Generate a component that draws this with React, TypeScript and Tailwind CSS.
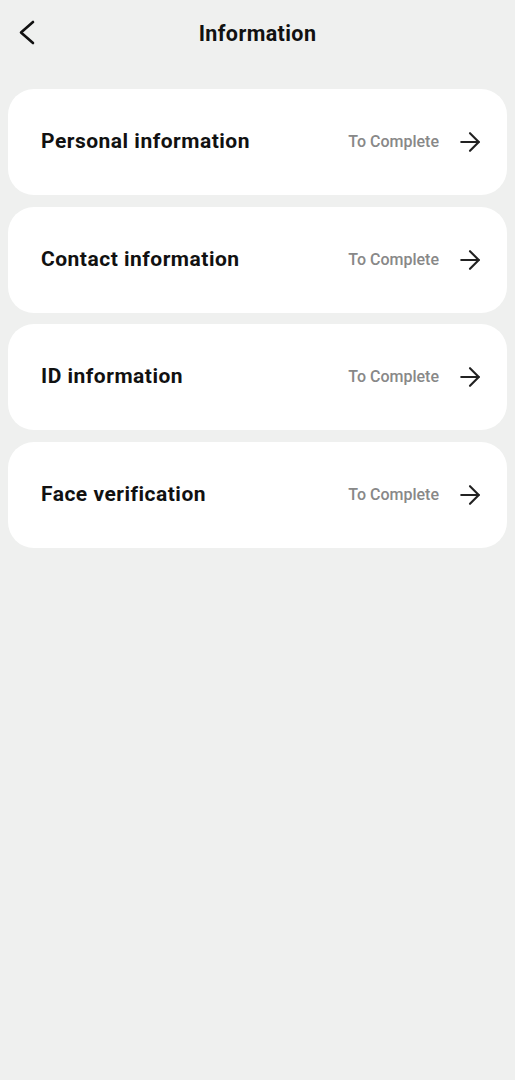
import { ArrowRight } from 'lucide-react';

const items = ['Personal information', 'Contact information', 'ID information', 'Face verification'];

export default function App() {
  return (
    <div className="min-h-screen bg-[#eff0ef] font-['Roboto',sans-serif]">
      <div className="relative flex h-[68px] items-center justify-center">
        <button className="absolute left-[18px] top-[19px] text-[#111]">
          <svg width="19" height="27" viewBox="0 0 19 27" fill="none" stroke="currentColor" strokeWidth="2.6" strokeLinecap="round" strokeLinejoin="round">
            <polyline points="15,3 3,13.5 15,24" />
          </svg>
        </button>
        <h1 className="text-[21.5px] font-bold tracking-[0.4px] text-[#111]">Information</h1>
      </div>
      <div className="mt-[21px] flex flex-col gap-[11.5px] px-[8px]">
        {items.map((item) => (
          <div
            key={item}
            className="flex h-[106px] items-center justify-between rounded-[26px] bg-white pl-[33px] pr-[22px]"
          >
            <span className="text-[21px] font-bold tracking-[0.5px] text-[#111]">{item}</span>
            <div className="flex items-center gap-[16px]">
              <span className="text-[16px] font-medium text-[#888]">To Complete</span>
              <ArrowRight size={30} strokeWidth={1.7} className="text-[#222]" />
            </div>
          </div>
        ))}
      </div>
    </div>
  );
}
